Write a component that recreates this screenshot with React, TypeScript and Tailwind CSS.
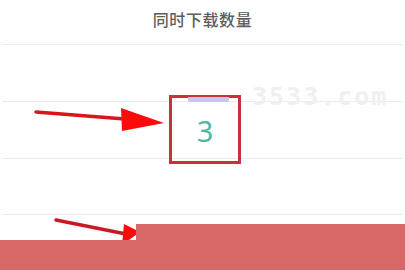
import React from "react";

const rowLine = "border-b border-[#ececec]";

export default function App() {
  return (
    <div className="relative w-[405px] h-[270px] overflow-hidden bg-white" style={{ fontFamily: '"Noto Sans", "Noto Sans CJK SC", sans-serif' }}>
      <div className="flex flex-col px-[2px]">
        <div className={`h-[45px] flex items-center justify-center ${rowLine}`}>
          <span className="text-[16px] leading-none font-medium text-[#5e5e5e] tracking-[0.6px] pb-[5px]">同时下载数量</span>
        </div>
        <div className={`h-[57px] ${rowLine}`} />
        <div className={`h-[57px] ${rowLine}`} />
        <div className={`h-[56px] ${rowLine}`} />
      </div>

      {/* watermark */}
      <div className="absolute left-[252px] top-[84px] text-[25px] font-bold leading-none text-[#f0f0f0] tracking-[2px]" style={{ fontFamily: '"DejaVu Sans Mono", monospace' }}>
        3533.com
      </div>

      {/* highlighted box */}
      <div className="absolute left-[169px] top-[95px] w-[72px] h-[69px] border-[3px] border-[#c8323a] flex items-center justify-center">
        <div className="absolute left-[16px] top-[-1px] w-[41px] h-[5px] bg-[#c9c6e6] rounded-b-[2px]" />
        <span className="text-[29px] font-normal leading-none text-[#4fb7a3] pt-[2px]">3</span>
      </div>

      {/* arrows */}
      <svg className="absolute left-0 top-0" width="405" height="270" viewBox="0 0 405 270">
        <line x1="36" y1="112" x2="125" y2="119" stroke="#d8141c" strokeWidth="3.5" strokeLinecap="round" />
        <polygon points="121,108 164,123 122,131" fill="#ff0a0a" />
        <line x1="56" y1="220" x2="126" y2="234" stroke="#c81a22" strokeWidth="3.5" strokeLinecap="round" />
        <polygon points="124,224 140,232 122,245" fill="#ff0a0a" />
      </svg>

      {/* pink overlay */}
      <div className="absolute left-0 top-[240px] w-[405px] h-[30px] bg-[#d86868]" />
      <div className="absolute left-[136px] top-[224px] w-[269px] h-[46px] bg-[#d86868]" />
    </div>
  );
}
